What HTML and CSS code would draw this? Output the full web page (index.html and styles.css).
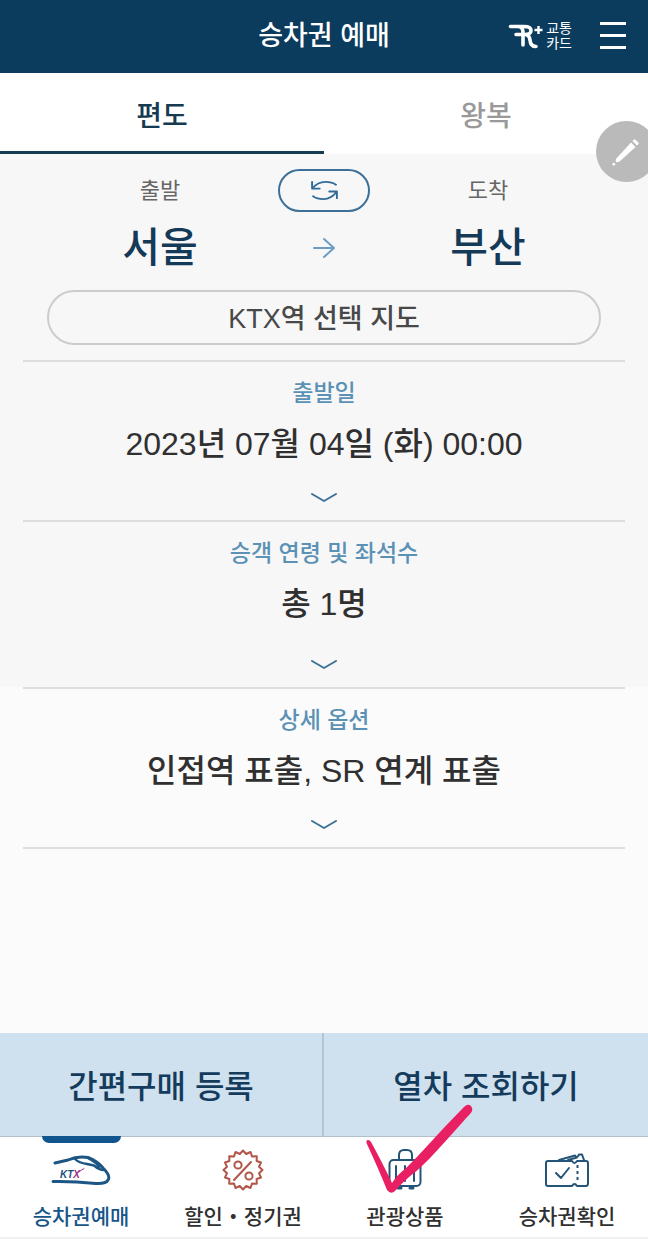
FILE: index.html
```html
<!DOCTYPE html>
<html lang="ko">
<head>
<meta charset="utf-8">
<meta name="viewport" content="width=device-width, initial-scale=1">
<title>승차권 예매</title>
<link rel="stylesheet" href="styles.css">
</head>
<body>
<header class="topbar">
  <h1 class="topbar-title">승차권 예매</h1>
  <div class="topbar-actions">
    <a class="card-link" href="#card">
      <svg class="card-logo" viewBox="0 0 36 28" aria-hidden="true">
        <path d="M2.500 4.500H16Q23 4.500 23 8.500T17 12.500H8M10 4.500Q15 5 15 10V23M17 12.500Q21.500 13 22 18Q22.500 24.500 28 24.500" stroke-width="3.600"/>
        <path d="M30.500 4V12M26.500 8H34.500" stroke-width="2.400" stroke-linecap="butt"/>
      </svg>
      <span>교통<br>카드</span>
    </a>
    <button class="menu-button" type="button" aria-label="메뉴"><i></i><i></i><i></i></button>
  </div>
</header>

<nav class="tabs">
  <button class="tab tab-active" type="button">편도</button>
  <button class="tab" type="button">왕복</button>
  <button class="edit-button" type="button" aria-label="편집">
    <svg viewBox="0 0 32 32" aria-hidden="true">
      <path d="M4.500 24L21 6L26 11L9 26.500Q6 28.500 4.500 27.500Q3.500 26 4.500 24Z"/><path d="M22.500 4.500L24 3Q25 2 26 3L29 6Q30 7 29 8L27.500 9.500Z"/><circle cx="2" cy="30" r="1.500"/>
    </svg>
  </button>
</nav>

<main class="booking">
  <div class="booking-upper">
    <section class="route">
      <span class="route-label">출발</span>
      <button class="swap-button" type="button" aria-label="출발 도착 바꾸기">
        <svg viewBox="0 0 28 22" aria-hidden="true"><path d="M1 2V9H9M1 9Q7 2 15 2Q22 2 26 5M27 19V12H19M27 12Q21 20 13 20Q6 20 2 17"/></svg>
      </button>
      <span class="route-label">도착</span>
      <button class="station" type="button">서울</button>
      <svg class="route-arrow" viewBox="0 0 22 20" aria-hidden="true"><path d="M1 10H21M11 1L21 10L11 19"/></svg>
      <button class="station" type="button">부산</button>
    </section>
    <button class="map-button" type="button">KTX역 선택 지도</button>
    <button class="option" type="button">
      <span class="option-label">출발일</span>
      <span class="option-value">2023년 07월 04일 (화) 00:00</span>
      <svg class="chevron" viewBox="0 0 26 10" aria-hidden="true"><path d="M1 1L13 8L25 1"/></svg>
    </button>
    <button class="option option-tall" type="button">
      <span class="option-label">승객 연령 및 좌석수</span>
      <span class="option-value">총 1명</span>
      <svg class="chevron" viewBox="0 0 26 10" aria-hidden="true"><path d="M1 1L13 8L25 1"/></svg>
    </button>
  </div>
  <button class="option option-last" type="button">
    <span class="option-label">상세 옵션</span>
    <span class="option-value">인접역 표출, SR 연계 표출</span>
    <svg class="chevron" viewBox="0 0 26 10" aria-hidden="true"><path d="M1 1L13 8L25 1"/></svg>
  </button>
</main>

<div class="actions">
  <button class="action" type="button">간편구매 등록</button>
  <button class="action" type="button">열차 조회하기</button>
</div>

<nav class="bottom-nav">
  <a class="nav-item nav-active" href="#booking">
    <svg class="nav-icon" viewBox="0 0 62 44" aria-hidden="true">
      <path d="M5 16L18 13Q28 8.500 38 10.500Q47 14 53 21Q61 29 58 33Q56 37 46 36.500Q22 34 3 34.500" stroke-width="3"/>
      <path d="M25 12Q29 16 37 17L44 18.500Q49 23 54 23M38 11Q47 16 49 20" stroke-width="2.400"/>
      <text class="ktx" x="10" y="31">KT<tspan class="ktx-x">X</tspan></text>
      <path class="ktx-tail" d="M27 26L34 21.500"/>
    </svg>
    <span>승차권예매</span>
  </a>
  <a class="nav-item" href="#discount">
    <svg class="nav-icon nav-icon-red" viewBox="0 0 62 44" aria-hidden="true">
      <g transform="translate(31 23)">
        <path d="M19.500 0L16 3.200L18 7.500L13.600 9L13.800 13.800L9 13.600L7.500 18L3.200 16L0 19.500L-3.200 16L-7.500 18L-9 13.600L-13.800 13.800L-13.600 9L-18 7.500L-16 3.200L-19.500 0L-16 -3.200L-18 -7.500L-13.600 -9L-13.800 -13.800L-9 -13.600L-7.500 -18L-3.200 -16L0 -19.500L3.200 -16L7.500 -18L9 -13.600L13.800 -13.800L13.600 -9L18 -7.500L16 -3.200Z"/>
        <path d="M-9 10L8 -8"/><circle cx="-5" cy="-5" r="3.600"/><circle cx="6" cy="6" r="3.600"/>
      </g>
    </svg>
    <span>할인・정기권</span>
  </a>
  <a class="nav-item" href="#tour">
    <svg class="nav-icon" viewBox="0 0 62 44" aria-hidden="true">
      <rect x="15.500" y="13" width="31" height="26" rx="4"/>
      <path d="M25 12V8Q25 3 30 3H33Q38 3 38 8V12M22 19V34M31 19V34M40 19V34"/>
      <path d="M24 41H27M36 41H39" stroke-width="3"/>
    </svg>
    <span>관광상품</span>
    <svg class="check-mark" viewBox="0 0 110 95" aria-hidden="true">
      <path d="M2.500 40Q2 37 4 37Q6 37 7 39Q17 57 28 80Q33 72 41 66C56 52 78 26 100 4Q104 0 107 3Q110 7 106 11C82 37 62 62 45 74Q37 81 31 88Q27 92 23 87Q15 67 2.500 40Z"/>
    </svg>
  </a>
  <a class="nav-item" href="#tickets">
    <svg class="nav-icon" viewBox="0 0 62 44" aria-hidden="true">
      <path d="M12 14H36Q38.500 18 41 14H50Q52 14 52 16V36Q52 39 50 39H41Q38.500 35 36 39H12Q10 39 10 37V16Q10 14 12 14ZM20 26L25 31L33 21"/>
      <path d="M23 13L39 8.500Q41 12 43 7.500L46 7.500L48 13M32 13L41 10.500"/>
      <path d="M41.500 18V35" stroke-dasharray="3 3" stroke-linecap="butt"/>
    </svg>
    <span>승차권확인</span>
  </a>
</nav>
</body>
</html>
```

FILE: styles.css
```css
* {
  box-sizing: border-box;
}

body {
  margin: 0;
  min-height: 100vh;
  display: flex;
  flex-direction: column;
  overflow-x: hidden;
  background: #fbfbfb;
  color: #303030;
  font-family: "Liberation Sans", "Noto Sans CJK KR", sans-serif;
  font-weight: 500;
}

button {
  margin: 0;
  padding: 0;
  border: 0;
  background: none;
  color: inherit;
  font: inherit;
  cursor: pointer;
}

a {
  color: inherit;
  text-decoration: none;
}

svg {
  display: block;
  fill: none;
  stroke: currentColor;
  stroke-width: 2;
  stroke-linecap: round;
  stroke-linejoin: round;
}

.topbar {
  display: grid;
  grid-template-columns: 1fr auto 1fr;
  align-items: center;
  height: 73px;
  padding: 0 22px 2px;
  background: #0b3c5e;
  color: #fff;
}

.topbar-title {
  grid-column: 2;
  margin: 0;
  font-size: 27px;
  font-weight: 500;
  line-height: 40px;
}

.topbar-actions {
  display: flex;
  align-items: center;
  justify-content: flex-end;
  gap: 28px;
}

.card-link {
  display: flex;
  align-items: center;
  gap: 2px;
  font-size: 14px;
  font-weight: 400;
  line-height: 15px;
}

.card-logo {
  width: 36px;
  height: 28px;
}

.menu-button {
  display: flex;
  flex-direction: column;
  justify-content: space-between;
  width: 26px;
  height: 27px;
}

.menu-button i {
  height: 3px;
  background: #fff;
}

.tabs {
  position: relative;
  display: grid;
  grid-template-columns: 1fr 1fr;
  height: 81px;
  background: #fff;
}

.tab {
  padding-top: 3px;
  border-bottom: 3px solid transparent;
  color: #999;
  font-size: 28px;
}

.tab-active {
  border-color: #163a50;
  color: #163a50;
}

.edit-button {
  position: absolute;
  top: 48px;
  right: -9px;
  display: grid;
  place-items: center;
  width: 61px;
  height: 61px;
  border-radius: 50%;
  background: #bababa;
  color: #fff;
}

.edit-button svg {
  width: 29px;
  height: 29px;
  fill: currentColor;
  stroke: none;
}

.booking {
  flex: 1;
}

.booking-upper {
  background: #f7f7f7;
}

.route {
  display: grid;
  grid-template-columns: 1fr 92px 1fr;
  align-items: center;
  justify-items: center;
  row-gap: 8px;
  padding: 15px 42px 14px;
}

.route-label {
  color: #666;
  font-size: 22px;
  font-weight: 400;
  line-height: 32px;
}

.swap-button {
  display: grid;
  place-items: center;
  width: 92px;
  height: 43px;
  border: 2px solid #3c7099;
  border-radius: 22px;
  color: #316c98;
}

.swap-button svg {
  width: 27px;
  height: 21px;
}

.station {
  color: #143a58;
  font-size: 41px;
  line-height: 56px;
}

.route-arrow {
  width: 22px;
  height: 20px;
  color: #6c9dc3;
}

.map-button {
  display: block;
  width: calc(100% - 94px);
  height: 55px;
  margin: 0 auto 15px;
  padding-bottom: 2px;
  border: 2px solid #cbcdcd;
  border-radius: 28px;
  color: #484848;
  font-size: 27px;
}

.option {
  display: flex;
  flex-direction: column;
  align-items: center;
  width: calc(100% - 46px);
  height: 160px;
  margin: 0 auto;
  padding: 15px 0 17px;
  border-top: 2px solid #dedede;
}

.option-tall {
  height: 167px;
}

.option-last {
  height: 162px;
  border-bottom: 2px solid #dedede;
}

.option-label {
  color: #5b91b5;
  font-size: 23px;
  line-height: 32px;
}

.option-value {
  margin-top: 12px;
  font-size: 32px;
  line-height: 46px;
}

.chevron {
  width: 26px;
  height: 10px;
  margin-top: auto;
  color: #3d7196;
}

.actions {
  display: grid;
  grid-template-columns: 1fr 1fr;
  height: 104px;
  border-bottom: 1px solid #b1bfca;
  background: #cfe0ee;
}

.action {
  padding-bottom: 2px;
  color: #143b5c;
  font-size: 32px;
}

.action:first-child {
  border-right: 2px solid #b1c5d5;
}

.bottom-nav {
  display: grid;
  grid-template-columns: repeat(4, 1fr);
  height: 102px;
  border-bottom: 2px solid #f1f1f1;
  background: #fff;
}

.nav-item {
  position: relative;
  display: flex;
  flex-direction: column;
  align-items: center;
  gap: 11px;
  padding-top: 10px;
  font-size: 21px;
  line-height: 30px;
}

.nav-active {
  color: #175688;
}

.nav-active::before {
  content: "";
  position: absolute;
  top: -1px;
  width: 79px;
  height: 7px;
  border-radius: 0 0 7px 7px;
  background: #10558d;
}

.nav-icon {
  width: 62px;
  height: 44px;
  color: #245477;
}

.nav-active .nav-icon {
  color: #1b5685;
}

.nav-item .nav-icon-red {
  color: #b15648;
}

.ktx {
  fill: #174d7c;
  stroke: none;
  font-size: 10px;
  font-weight: 700;
  font-style: italic;
}

.ktx-x {
  fill: #a33187;
}

.ktx-tail {
  stroke: #a33187;
  stroke-width: 1;
}

.check-mark {
  position: absolute;
  top: -34px;
  left: calc(50% - 41px);
  width: 110px;
  height: 95px;
  fill: #e91f63;
  stroke: none;
}
```
